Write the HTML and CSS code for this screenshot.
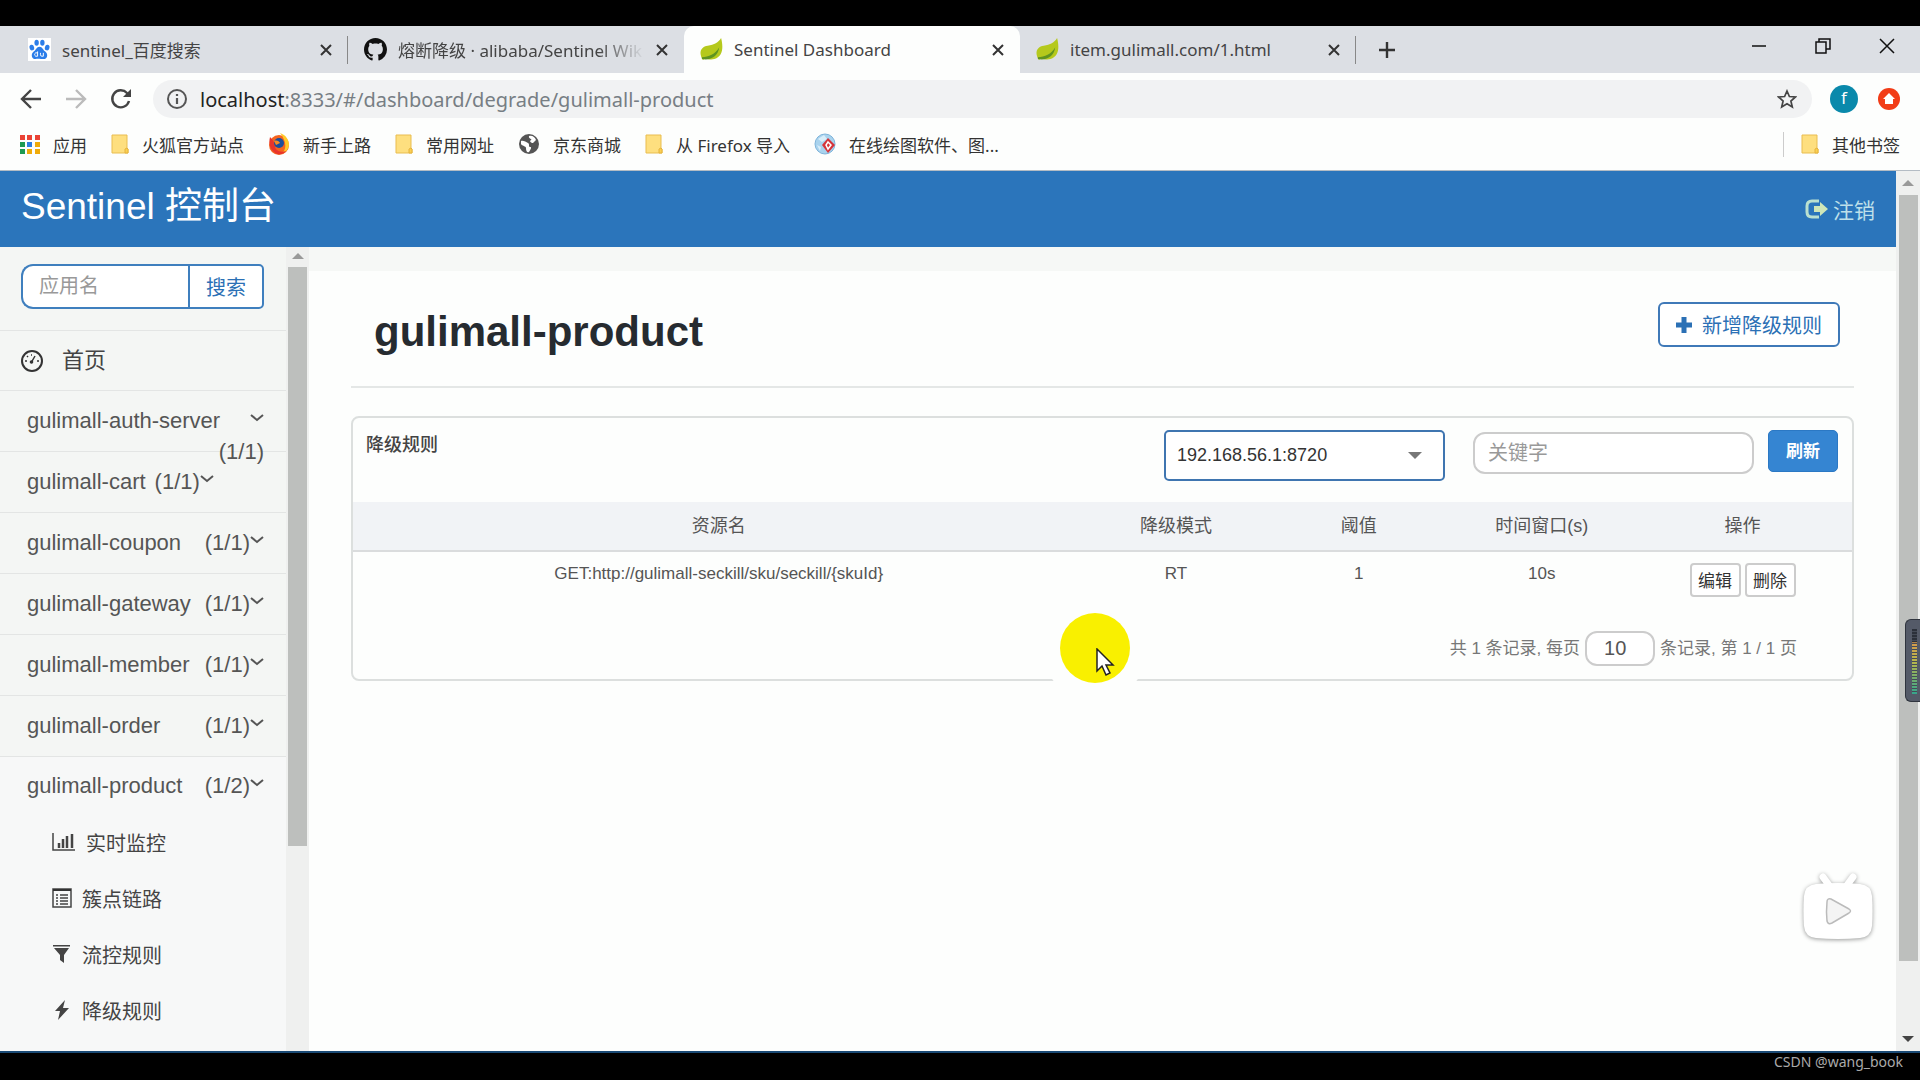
FILE: index.html
```html
<!DOCTYPE html>
<html lang="zh-CN">
<head>
    <meta charset="UTF-8">
    <meta name="viewport" content="width=device-width, initial-scale=1.0">
    <title>Sentinel Dashboard</title>
    <link rel="stylesheet" href="styles.css">
</head>
<body>
    <!-- 公用图标 -->
    <svg class="defs" width="0" height="0">
        <symbol id="i-close" viewBox="0 0 14 14"><path d="M2 2l10 10M12 2L2 12" fill="none" stroke="#333" stroke-width="2"/></symbol>
        <symbol id="i-leaf" viewBox="0 0 24 24">
            <path d="M22 0c2 8 3 19-7 22-4 1-7 0-9-1l-3 2c-5-8-2-14 5-15C15 7 19 5 22 0z" fill="#b5c91c"/>
            <path d="M2 20c7 0 14-3 18-10-1 9-9 14-18 12z" fill="#5f9420"/>
        </symbol>
        <symbol id="i-folder" viewBox="0 0 18 20">
            <path d="M1 1h15v13l1 1v4H1z" fill="#fedf7f" stroke="#e9bd51" stroke-width="1"/>
            <path d="M14 19v-4l2-1 1 1v4z" fill="#fbd052" stroke="#e5b33e" stroke-width="1"/>
        </symbol>
        <symbol id="i-down" viewBox="0 0 14 8"><path d="M1 1l6 5 6-5" fill="none" stroke="#555" stroke-width="2"/></symbol>
    </svg>

    <div class="browser">
        <div class="tabs">
            <div class="tab">
                <svg class="favicon" viewBox="0 0 24 24">
                    <rect width="24" height="24" fill="#fff"/>
                    <g fill="#2b7de9">
                        <ellipse cx="4" cy="10" rx="2.400" ry="3" transform="rotate(-15 4 10)"/>
                        <ellipse cx="9" cy="5" rx="2.300" ry="3.200"/>
                        <ellipse cx="15" cy="5" rx="2.300" ry="3.200"/>
                        <ellipse cx="20" cy="10" rx="2.400" ry="3" transform="rotate(15 20 10)"/>
                        <path d="M12 9c3 0 4 4 6 5 3 2 3 8-2 8-2 0-6-1-8 0-5 0-5-6-2-8 2-1 3-5 6-5z"/>
                    </g>
                    <path d="M10 14v5H8a2 2 0 010-3.500h2M13 15.500v2q0 1.500 1.500 1.500h1.500v-3.500" fill="none" stroke="#fff"/>
                </svg>
                <span class="tab-title">sentinel_百度搜索</span>
                <button class="tab-close" aria-label="关闭"><svg><use href="#i-close"/></svg></button>
            </div>
            <div class="tab">
                <svg class="favicon" viewBox="0 0 16 16"><path fill="#111" d="M8 0C3.580 0 0 3.580 0 8c0 3.540 2.290 6.530 5.470 7.590.4.070.55-.17.55-.38 0-.19-.01-.82-.01-1.490-2.010.37-2.530-.49-2.690-.94-.09-.23-.48-.94-.82-1.130-.28-.15-.68-.52-.01-.53.63-.01 1.080.58 1.230.82.72 1.210 1.870.87 2.330.66.07-.52.28-.87.51-1.070-1.780-.2-3.640-.89-3.640-3.950 0-.87.31-1.590.82-2.150-.08-.2-.36-1.020.08-2.120 0 0 .67-.21 2.200.82.64-.18 1.320-.27 2-.27s1.360.09 2 .27c1.530-1.040 2.200-.82 2.200-.82.44 1.100.16 1.920.08 2.120.51.56.82 1.270.82 2.150 0 3.070-1.870 3.750-3.650 3.950.29.25.54.73.54 1.480 0 1.070-.01 1.930-.01 2.200 0 .21.15.46.55.38A8 8 0 0016 8c0-4.420-3.580-8-8-8z"/></svg>
                <span class="tab-title tab-fade">熔断降级 · alibaba/Sentinel Wik</span>
                <button class="tab-close" aria-label="关闭"><svg><use href="#i-close"/></svg></button>
            </div>
            <div class="tab active">
                <svg class="favicon"><use href="#i-leaf"/></svg>
                <span class="tab-title">Sentinel Dashboard</span>
                <button class="tab-close" aria-label="关闭"><svg><use href="#i-close"/></svg></button>
            </div>
            <div class="tab">
                <svg class="favicon"><use href="#i-leaf"/></svg>
                <span class="tab-title">item.gulimall.com/1.html</span>
                <button class="tab-close" aria-label="关闭"><svg><use href="#i-close"/></svg></button>
            </div>
            <button class="new-tab" aria-label="新标签页"><svg width="18" height="18" viewBox="0 0 18 18"><path d="M9 1v16M1 9h16" stroke="#333" stroke-width="2.400"/></svg></button>
            <div class="window-buttons">
                <button aria-label="最小化"><svg width="16" height="16" viewBox="0 0 16 16"><path d="M1 8h14" stroke="#111" stroke-width="1.500"/></svg></button>
                <button aria-label="还原"><svg width="16" height="16" viewBox="0 0 16 16"><path d="M1 4h10v11H1zM4 4V1h11v10h-4" fill="none" stroke="#111" stroke-width="1.500"/></svg></button>
                <button aria-label="关闭窗口"><svg width="16" height="16" viewBox="0 0 16 16"><path d="M1 1l14 14M15 1L1 15" stroke="#111" stroke-width="1.500"/></svg></button>
            </div>
        </div>

        <div class="toolbar">
            <button aria-label="后退"><svg width="22" height="22" viewBox="0 0 22 22"><path d="M21 11H2M11 2l-9 9 9 9" fill="none" stroke="#444" stroke-width="2.400"/></svg></button>
            <button aria-label="前进"><svg width="22" height="22" viewBox="0 0 22 22"><path d="M1 11h19M11 2l9 9-9 9" fill="none" stroke="#bbb" stroke-width="2.400"/></svg></button>
            <button aria-label="刷新页面"><svg width="22" height="22" viewBox="0 0 22 22"><path d="M19 13a8.500 8.500 0 11-2-8l2 2" fill="none" stroke="#444" stroke-width="2.400"/><path d="M21 1v8h-8z" fill="#444"/></svg></button>
            <div class="address">
                <svg width="22" height="22" viewBox="0 0 22 22"><circle cx="11" cy="11" r="9" fill="none" stroke="#555" stroke-width="2"/><path d="M11 10v6M11 6v2" stroke="#555" stroke-width="2.200"/></svg>
                <span class="url"><b>localhost</b>:8333/#/dashboard/degrade/gulimall-product</span>
                <svg width="20" height="20" viewBox="0 0 20 20"><path d="M10 2l2.400 5.500 6 .5-4.500 4 1.400 6L10 14.800 4.700 18l1.400-6L1.600 8l6-.5z" fill="none" stroke="#444" stroke-width="1.700"/></svg>
            </div>
            <span class="avatar">f</span>
            <svg width="22" height="22" viewBox="0 0 22 22"><circle cx="11" cy="11" r="11" fill="#f23c17"/><path d="M11 5l6 6h-2v5H7v-5H5z" fill="#fff"/></svg>
        </div>

        <div class="bookmarks">
            <a href="#">
                <svg width="20" height="20" viewBox="0 0 20 20">
                    <path d="M0 1h5v5H0zM7 1h5v5H7zM15 1h5v5h-5z" fill="#ea4335"/>
                    <path d="M0 8h5v5H0zM0 15h5v5H0z" fill="#1e9a52"/>
                    <path d="M7 8h5v5H7z" fill="#2f7de1"/>
                    <path d="M15 8h5v5h-5zM7 15h5v5H7zM15 15h5v5h-5z" fill="#f0ab0a"/>
                </svg>应用</a>
            <a href="#"><svg class="folder"><use href="#i-folder"/></svg>火狐官方站点</a>
            <a href="#">
                <svg width="22" height="22" viewBox="0 0 22 22">
                    <circle cx="11" cy="12" r="10" fill="#f4641e"/>
                    <path d="M12 0c6 2 9 7 9 12a10 10 0 01-8 9c6-4 6-12-1-21z" fill="#ffc928"/>
                    <path d="M2 4c-2 8 1 14 7 17 5 1 8-1 9-3-6 2-11-1-11-5 0-3-2-6-5-9z" fill="#e9352b"/>
                    <circle cx="11" cy="10" r="5" fill="#1d4e9c"/>
                    <path d="M6 8c3-1 5 0 6 2l-4 2z" fill="#f98b22"/>
                </svg>新手上路</a>
            <a href="#"><svg class="folder"><use href="#i-folder"/></svg>常用网址</a>
            <a href="#">
                <svg width="22" height="22" viewBox="0 0 22 22">
                    <circle cx="11" cy="11" r="10" fill="#555"/>
                    <path d="M3 8c2-1 5 1 7 2s0 4 2 4 1 2-1 5c-2 1-3-1-3-4 0-2-4-2-5-4zM11 3c3-1 6 1 7 4l-3 3c-2 0-4-2-2-3s-3-1-2-4z" fill="#fff"/>
                </svg>京东商城</a>
            <a href="#"><svg class="folder"><use href="#i-folder"/></svg>从 Firefox 导入</a>
            <a href="#">
                <svg width="22" height="22" viewBox="0 0 22 22">
                    <circle cx="11" cy="11" r="10" fill="#a9d3ee" stroke="#7fb4da"/>
                    <path d="M4 6l6-4 3 4-5 3zM3 12l4 2-1 4z" fill="#d9eefa"/>
                    <path d="M14 5l7 7-7 8-6-8z" fill="#d6343a"/>
                    <path d="M14 9l3 3-3 4-2-4z" fill="#d6343a" stroke="#fff" stroke-width="1.500"/>
                </svg>在线绘图软件、图...</a>
            <a href="#" class="other"><svg class="folder"><use href="#i-folder"/></svg>其他书签</a>
        </div>

        <div class="page">
            <div class="page-body">
                <header class="header">
                    <h1>Sentinel 控制台</h1>
                    <a href="#"><svg width="24" height="20" viewBox="0 0 24 20"><path d="M14 2H7Q2 2 2 7v6q0 5 5 5h7" fill="none" stroke="#b9e0d0" stroke-width="3"/><path d="M9 7h6V3l8 7-8 7v-4H9z" fill="#cfe6b8"/></svg>注销</a>
                </header>
                <div class="main">
                    <aside class="sidebar">
                        <form class="search">
                            <input type="text" placeholder="应用名" aria-label="应用名">
                            <button type="button">搜索</button>
                        </form>
                        <a class="home" href="#">
                            <svg width="24" height="24" viewBox="0 0 24 24"><circle cx="12" cy="12" r="10" fill="none" stroke="#333" stroke-width="2"/><path d="M11 14l4-7M5 12h2M17 12h2M7 7l1 1M11 6h1" stroke="#333" stroke-width="1.500"/><circle cx="11.500" cy="13" r="1.800" fill="#333"/></svg>
                            首页
                        </a>
                        <a class="app wrapped" href="#"><span>gulimall-auth-server</span><svg><use href="#i-down"/></svg><span class="count">(1/1)</span></a>
                        <a class="app short" href="#"><span>gulimall-cart</span><span class="count">(1/1)</span><svg><use href="#i-down"/></svg></a>
                        <a class="app" href="#"><span>gulimall-coupon</span><span class="count">(1/1)</span><svg><use href="#i-down"/></svg></a>
                        <a class="app" href="#"><span>gulimall-gateway</span><span class="count">(1/1)</span><svg><use href="#i-down"/></svg></a>
                        <a class="app" href="#"><span>gulimall-member</span><span class="count">(1/1)</span><svg><use href="#i-down"/></svg></a>
                        <a class="app" href="#"><span>gulimall-order</span><span class="count">(1/1)</span><svg><use href="#i-down"/></svg></a>
                        <div class="opened">
                            <a class="app" href="#"><span>gulimall-product</span><span class="count">(1/2)</span><svg><use href="#i-down"/></svg></a>
                            <a class="sub" href="#"><svg width="24" height="20" viewBox="0 0 24 20"><path d="M1 1v17h22" fill="none" stroke="#444" stroke-width="1.500"/><path d="M7 16v-5M11 16V7M15 16V4M20 16V2" stroke="#444" stroke-width="2.500"/></svg>实时监控</a>
                            <a class="sub" href="#"><svg width="20" height="20" viewBox="0 0 20 20"><path d="M1 1h18v18H1z" fill="none" stroke="#444" stroke-width="1.500"/><path d="M1 2h18" stroke="#333" stroke-width="2"/><path d="M4 7h2M4 10h2M4 13h2M4 16h2M8 7h8M8 10h8M8 13h8M8 16h8" stroke="#444" stroke-width="1.500"/></svg>簇点链路</a>
                            <a class="sub" href="#"><svg width="20" height="20" viewBox="0 0 20 20"><path d="M1 1h17v1.500H1zM2 4h15l-5 7v8l-4-3v-5z" fill="#444"/></svg>流控规则</a>
                            <a class="sub" href="#"><svg width="20" height="20" viewBox="0 0 20 20"><path d="M13 0L3 11h5L6 20 17 8h-6z" fill="#444"/></svg>降级规则</a>
                        </div>
                    </aside>
                    <div class="scrollbar side-scroll">
                        <span class="arrow-up"></span>
                        <span class="thumb"></span>
                    </div>
                    <main class="content">
                        <div class="title-row">
                            <h2>gulimall-product</h2>
                            <button class="btn-add"><svg width="16" height="16" viewBox="0 0 16 16"><path d="M8 0v16M0 8h16" stroke="#2b70b5" stroke-width="5"/></svg>新增降级规则</button>
                        </div>
                        <section class="card">
                            <div class="card-head">
                                <span class="card-title">降级规则</span>
                                <div class="select-box">
                                    <select aria-label="机器"><option>192.168.56.1:8720</option></select>
                                </div>
                                <input type="text" placeholder="关键字" aria-label="关键字">
                                <button class="btn-refresh">刷新</button>
                            </div>
                            <table>
                                <thead>
                                    <tr>
                                        <th class="col-name">资源名</th>
                                        <th>降级模式</th>
                                        <th>阈值</th>
                                        <th>时间窗口(s)</th>
                                        <th class="col-action">操作</th>
                                    </tr>
                                </thead>
                                <tbody>
                                    <tr>
                                        <td>GET:http://gulimall-seckill/sku/seckill/{skuId}</td>
                                        <td>RT</td>
                                        <td>1</td>
                                        <td>10s</td>
                                        <td><div class="actions"><button>编辑</button><button>删除</button></div></td>
                                    </tr>
                                </tbody>
                            </table>
                            <div class="pager">
                                <label for="pageSize">共 1 条记录, 每页</label>
                                <input type="text" id="pageSize" value="10">
                                <span>条记录, 第 1 / 1 页</span>
                            </div>
                        </section>
                    </main>
                </div>
            </div>
            <div class="scrollbar page-scroll">
                <span class="arrow-up"></span>
                <span class="thumb"></span>
                <span class="arrow-down"></span>
            </div>
        </div>

        <!-- 鼠标高亮 -->
        <div class="pointer">
            <svg width="20" height="30" viewBox="0 0 20 30"><path d="M2 1v22l5-5 4 9 4-2-4-8h7z" fill="#fff" stroke="#222" stroke-width="1.500"/></svg>
        </div>
        <svg class="player" width="80" height="76" viewBox="0 0 80 76">
            <path d="M25 8l8 11M55 8l-8 11" stroke="#fff" stroke-width="7" stroke-linecap="round"/>
            <path d="M18 15Q40 13 62 15 73 16 74 27 75 42 74 57 73 68 62 69 40 71 18 69 7 68 6 57 5 42 6 27 7 16 18 15z" fill="#fff"/>
            <path d="M29 33q0-4 4-3l18 10q3 2 0 4L34 54q-4 2-5-2-1-9 0-19z" fill="#f4f4f4" stroke="#bbb" stroke-width="1.500"/>
        </svg>
        <div class="meter"><span></span></div>
    </div>
    <footer class="watermark">CSDN @wang_book</footer>
</body>
</html>
```
FILE: styles.css
```css
* {
    box-sizing: border-box;
}
body {
    margin: 0;
    padding-top: 26px;
    height: 100vh;
    display: flex;
    flex-direction: column;
    background-color: #000;
    color: #555;
    font-family: "Liberation Sans", "Noto Sans CJK SC", sans-serif;
    font-size: 20px;
    overflow: hidden;
}
a {
    color: inherit;
    text-decoration: none;
}
button, input, select {
    font-family: inherit;
    font-size: 20px;
    margin: 0;
}
svg {
    flex: none;
    display: block;
}
.defs {
    position: absolute;
}
.browser {
    position: relative;
    flex: 1;
    min-height: 0;
    display: flex;
    flex-direction: column;
    background-color: #fdfefd;
    border-bottom: 2px solid #1a4a75;
}

/* 标签栏 */
.tabs, .toolbar, .bookmarks {
    flex: none;
    display: flex;
    align-items: center;
    font-family: "Noto Sans", "Noto Sans CJK SC", sans-serif;
}
.tabs {
    height: 47px;
    padding-left: 12px;
    background-color: #dcdfe4;
    font-size: 17px;
    color: #444;
}
.tabs button, .toolbar button {
    border: none;
    background: none;
    padding: 0;
}
.tab {
    flex: 0 1 336px;
    min-width: 0;
    height: 100%;
    display: flex;
    align-items: center;
    padding: 0 15px 0 16px;
    position: relative;
}
.tab:not(.active)::after {
    content: "";
    position: absolute;
    right: 0;
    top: 10px;
    width: 1px;
    height: 28px;
    background-color: #888;
}
.tab:has(+ .active)::after {
    display: none;
}
.tab.active {
    background-color: #fdfefd;
    border-radius: 10px 10px 0 0;
}
.favicon {
    width: 23px;
    height: 23px;
    margin-right: 11px;
}
.tab-title {
    flex: 1;
    min-width: 0;
    white-space: nowrap;
}
.tab-fade {
    mask-image: linear-gradient(to right, #000 78%, transparent 96%);
}
.tab-close svg {
    width: 14px;
    height: 14px;
}
.new-tab {
    margin-left: 22px;
}
.window-buttons {
    margin-left: auto;
    display: flex;
    gap: 48px;
    padding: 0 25px 8px 0;
}

/* 地址栏 */
.toolbar {
    padding: 7px 20px 3px;
    gap: 23px;
}
.address {
    flex: 1;
    height: 38px;
    margin-left: -2px;
    margin-right: -5px;
    padding: 0 15px 0 13px;
    display: flex;
    align-items: center;
    gap: 12px;
    border-radius: 19px;
    background-color: #f1f2f3;
}
.url {
    flex: 1;
    color: #777e84;
}
.url b {
    font-weight: normal;
    color: #222;
}
.avatar {
    width: 28px;
    height: 28px;
    margin-right: -3px;
    border-radius: 50%;
    background-color: #0a89ab;
    color: #fff;
    font-size: 17px;
    line-height: 26px;
    text-align: center;
}
.bookmarks {
    height: 50px;
    padding: 0 20px 3px;
    gap: 24px;
    border-bottom: 1px solid #b4bcc4;
    font-size: 17px;
    color: #333;
}
.bookmarks a {
    display: flex;
    align-items: center;
    gap: 13px;
    white-space: nowrap;
}
.folder {
    width: 18px;
    height: 20px;
}
.bookmarks .other {
    margin-left: auto;
    padding-left: 17px;
    border-left: 1px solid #ccc;
}

/* 页面 */
.page {
    flex: 1;
    min-height: 0;
    display: flex;
}
.page-body {
    flex: 1;
    min-width: 0;
    display: flex;
    flex-direction: column;
}
.header {
    flex: none;
    height: 76px;
    padding: 0 21px;
    display: flex;
    align-items: center;
    justify-content: space-between;
    background-color: #2b75bb;
    color: #fff;
}
.header h1 {
    margin: 0 0 4px;
    font-size: 37px;
    font-weight: normal;
    line-height: 52px;
}
.header a {
    display: flex;
    align-items: center;
    gap: 4px;
    font-size: 21px;
    color: #bfe0ea;
}
.main {
    flex: 1;
    min-height: 0;
    display: flex;
}
.sidebar {
    flex: none;
    width: 286px;
    overflow: hidden;
    background-color: #f4f6f4;
}
.search {
    display: flex;
    padding: 17px 22px 21px 21px;
}
.search input {
    flex: 1;
    min-width: 0;
    height: 45px;
    padding: 0 16px;
    border: 2px solid #3f7fbe;
    border-right: none;
    border-radius: 12px 0 0 12px;
    background-color: #fff;
}
input::placeholder {
    color: #999;
}
.search button {
    width: 76px;
    padding: 0;
    border: 2px solid #3f7fbe;
    border-radius: 0 5px 5px 0;
    background-color: #fff;
    color: #2b70b5;
}
.home, .app {
    display: flex;
    height: 61px;
    border-top: 1px solid #e3e5e4;
    font-size: 22px;
    line-height: 31px;
}
.home {
    height: 60px;
    align-items: center;
    gap: 18px;
    padding-left: 20px;
    color: #444;
}
.app {
    flex-wrap: wrap;
    padding: 14px 22px 0 27px;
}
.app svg {
    width: 14px;
    height: 8px;
    margin-top: 9px;
}
.app .count {
    margin-left: auto;
}
.app.short .count {
    margin-left: 9px;
}
.app.wrapped svg {
    margin-left: auto;
}
.app.wrapped .count {
    width: 100%;
    text-align: right;
}
.opened {
    height: 100%;
    background-color: #f7f8f8;
}
.opened .app {
    height: 58px;
    padding-top: 13px;
}
.sub {
    display: flex;
    align-items: center;
    height: 56px;
    padding-left: 52px;
    gap: 10px;
    color: #444;
}

/* 滚动条 */
.scrollbar {
    flex: none;
    width: 24px;
    display: flex;
    flex-direction: column;
    align-items: center;
    background-color: #eff0ef;
}
.scrollbar .thumb {
    width: 19px;
    background-color: #bdbfbd;
}
.side-scroll {
    width: 23px;
}
.side-scroll .thumb {
    height: 72%;
}
.page-scroll .thumb {
    height: 87%;
}
.arrow-up, .arrow-down {
    border: 6px solid transparent;
}
.arrow-up {
    margin: 0 0 8px;
    border-bottom-color: #999;
}
.page-scroll .arrow-up {
    margin: 3px 0 9px;
}
.arrow-down {
    margin: auto 0 3px;
    border-top-color: #444;
}

/* 内容区 */
.content {
    flex: 1;
    min-width: 0;
    padding: 0 42px;
    border-top: 24px solid #f6f8f6;
}
.title-row {
    display: flex;
    justify-content: space-between;
    align-items: flex-start;
    height: 117px;
    padding: 31px 14px 0 23px;
    border-bottom: 2px solid #e4e7e6;
}
.title-row h2 {
    margin: 6px 0 0;
    color: #262b30;
    font-size: 42px;
    line-height: 48px;
}
.btn-add {
    display: flex;
    align-items: center;
    gap: 10px;
    height: 45px;
    padding: 0 16px;
    border: 2px solid #3f79b8;
    border-radius: 6px;
    background-color: #fff;
    color: #2b70b5;
}
.card {
    margin-top: 28px;
    border: 2px solid #dcdfde;
    border-radius: 8px;
}
.card-head {
    display: flex;
    align-items: flex-start;
    height: 84px;
    padding: 12px 14px 0 13px;
}
.card-title {
    flex: 1;
    font-size: 18px;
    font-weight: 500;
    line-height: 30px;
    color: #444;
}
.select-box {
    position: relative;
    width: 281px;
    margin-right: 28px;
}
.select-box::after {
    content: "";
    position: absolute;
    right: 23px;
    top: 22px;
    border: 7px solid transparent;
    border-top-color: #777;
    pointer-events: none;
}
.select-box select {
    width: 100%;
    height: 51px;
    padding: 0 11px 2px;
    appearance: none;
    border: 2px solid #3f75b0;
    border-radius: 5px;
    background-color: #fff;
    color: #333;
    font-size: 18px;
}
.card-head input {
    width: 281px;
    height: 42px;
    margin: 2px 14px 0 0;
    padding: 0 13px;
    border: 2px solid #ccc;
    border-radius: 12px;
}
.btn-refresh {
    width: 70px;
    height: 42px;
    padding: 0 0 3px;
    border: 1px solid #2b78c4;
    border-radius: 5px;
    background-color: #3585d2;
    color: #fff;
    font-size: 17px;
    font-weight: bold;
}
table {
    width: 100%;
    table-layout: fixed;
    border-collapse: collapse;
}
th {
    height: 49px;
    padding: 0 0 5px;
    border-bottom: 2px solid #dadcdd;
    background-color: #f1f3f6;
    font-size: 18px;
    font-weight: normal;
}
td {
    height: 62px;
    padding: 10px 0 0;
    font-size: 17px;
    line-height: 24px;
    text-align: center;
    vertical-align: top;
}
.col-name {
    width: 48.8%;
}
.col-action {
    width: 14.6%;
}
.actions {
    display: flex;
    justify-content: center;
    gap: 4px;
    padding-top: 1px;
}
.actions button {
    width: 51px;
    height: 34px;
    padding: 0 0 2px;
    border: 2px solid #ccc;
    border-radius: 4px;
    background-color: #fff;
    color: #333;
    font-size: 17px;
}
.pager {
    display: flex;
    align-items: center;
    justify-content: flex-end;
    gap: 5px;
    padding: 18px 55px 13px 0;
    font-size: 17px;
    line-height: 22px;
    color: #777;
}
.pager input {
    width: 70px;
    height: 35px;
    padding: 0 17px;
    border: 2px solid #ccc;
    border-radius: 12px;
    color: #555;
}

/* 浮层 */
.pointer {
    position: absolute;
    left: 1060px;
    top: 587px;
    width: 70px;
    height: 70px;
    padding: 35px 0 0 35px;
    border-radius: 50%;
    background-color: #f9f000;
    box-shadow: 0 0 0 18px #fdfefd;
}
.player {
    position: absolute;
    right: 42px;
    bottom: 106px;
    filter: drop-shadow(0 1px 2px rgba(0, 0, 0, 0.4));
}
.meter {
    position: absolute;
    right: 0;
    top: 593px;
    width: 15px;
    height: 83px;
    padding: 9px 3px 7px 6px;
    border: 1px solid #2f343e;
    border-right: none;
    border-radius: 6px 0 0 6px;
    background-color: #545a68;
}
.meter span {
    display: block;
    height: 100%;
    background: repeating-linear-gradient(transparent 0 2px, #454b57 2px 3px), linear-gradient(#2b303a 20%, #d59a4c 21%, #b7b64c 50%, #35a58c);
}
.watermark {
    height: 27px;
    padding-right: 17px;
    color: #aaa;
    font-family: "Noto Sans", sans-serif;
    font-size: 14px;
    line-height: 18px;
    text-align: right;
}
```
